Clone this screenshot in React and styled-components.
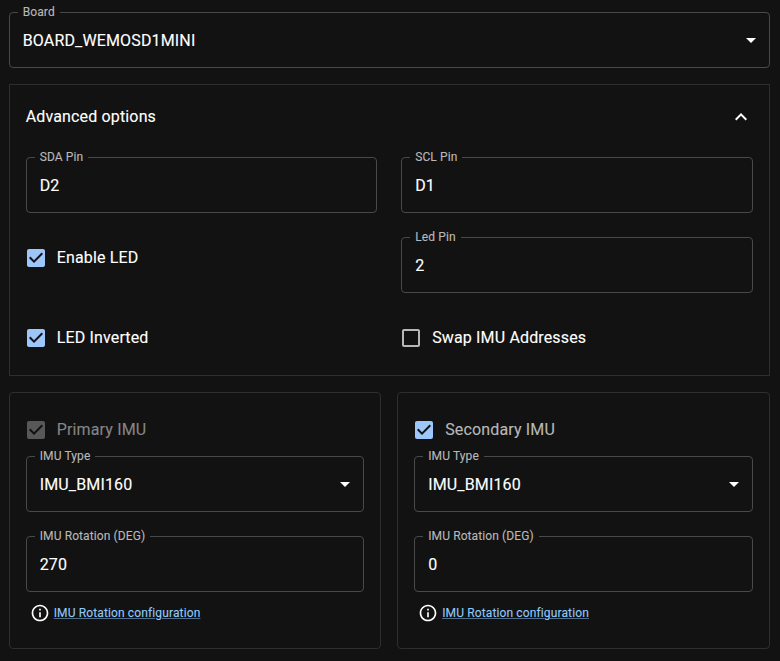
import React from "react";
import styled, { createGlobalStyle } from "styled-components";

const GlobalStyle = createGlobalStyle`
  *, *::before, *::after { box-sizing: border-box; }
  html, body { margin: 0; background: #121212; }
  body {
    color: #fff;
    font: 400 16px/24px Roboto, "Liberation Sans", sans-serif;
    letter-spacing: 0.15px;
    -webkit-text-stroke: 0.12px currentColor;
  }
`;

const Page = styled.main`
  display: flex;
  flex-direction: column;
  gap: 16px;
  width: 780px;
  height: 661px;
  padding: 12px 10.3px 0 8.7px;
  overflow: hidden;
`;

const Outline = styled.div`
  position: relative;
  display: flex;
  align-items: center;
  justify-content: space-between;
  height: 56px;
  padding: 0 6px 0 13px;
  border: 1px solid #494949;
  border-radius: 4px;
`;

const FloatingLabel = styled.span`
  position: absolute;
  left: 8px;
  top: -9px;
  padding: 0 5px;
  background: #121212;
  color: #b8b8b8;
  font-size: 12px;
  line-height: 16px;
  letter-spacing: 0.11px;
  white-space: nowrap;
`;

const Value = styled.span`
  line-height: 23px;
`;

const Icon = styled.svg`
  display: block;
  flex: none;
  width: ${(p) => p.$size || 24}px;
  height: ${(p) => p.$size || 24}px;
  fill: ${(p) => p.$color || "#fff"};
`;

const Panel = styled.section`
  height: 292px;
  padding: 0 16px;
  border: 1px solid #2e2e2e;
`;

const PanelHeader = styled.header`
  display: flex;
  align-items: center;
  justify-content: space-between;
  height: 64px;
  margin-bottom: 8px;
`;

const OptionGrid = styled.div`
  display: grid;
  grid-template-columns: 1fr 1fr;
  gap: 24px;
  align-items: start;
`;

const CheckRow = styled.label`
  display: flex;
  align-items: center;
  gap: 9px;
  height: 42px;
  margin-left: -2px;
  color: ${(p) => p.$color || "#fff"};
`;

const Cards = styled.div`
  display: grid;
  grid-template-columns: 1fr 1fr;
  gap: 16px;
`;

const Card = styled.section`
  display: flex;
  flex-direction: column;
  height: 257px;
  padding: 16px;
  border: 1px solid #2e2e2e;
  border-radius: 4px;
`;

const Fields = styled.div`
  display: flex;
  flex-direction: column;
  gap: 24px;
  margin-top: 5px;
`;

const HelpRow = styled.div`
  display: flex;
  align-items: center;
  gap: 4px;
  margin: 11px 0 0 4px;
  height: 20px;
`;

const HelpLink = styled.a`
  color: #90caf9;
  font-size: 12px;
  line-height: 20px;
  letter-spacing: 0.13px;
  text-decoration: underline;
  text-decoration-color: rgba(144, 202, 249, 0.5);
`;

const paths = {
  arrow: "M7 10l5 5 5-5z",
  chevron: "M12 8l-6 6 1.41 1.41L12 10.83l4.59 4.58L18 14z",
  checked:
    "M19 3H5c-1.11 0-2 .9-2 2v14c0 1.1.89 2 2 2h14c1.11 0 2-.9 2-2V5c0-1.1-.89-2-2-2zm-9 14l-5-5 1.41-1.41L10 14.17l7.59-7.59L19 8l-9 9z",
  unchecked:
    "M19 5v14H5V5h14m0-2H5c-1.1 0-2 .9-2 2v14c0 1.1.9 2 2 2h14c1.1 0 2-.9 2-2V5c0-1.1-.9-2-2-2z",
  info: "M11 7h2v2h-2zm0 4h2v6h-2zm1-9C6.48 2 2 6.48 2 12s4.48 10 10 10 10-4.48 10-10S17.52 2 12 2zm0 18c-4.41 0-8-3.59-8-8s3.59-8 8-8 8 3.59 8 8-3.59 8-8 8z",
};

const Glyph = ({ name, size, color }) => (
  <Icon viewBox="0 0 24 24" $size={size} $color={color} aria-hidden="true">
    <path d={paths[name]} />
  </Icon>
);

const Field = ({ label, value, select }) => (
  <Outline>
    <FloatingLabel>{label}</FloatingLabel>
    <Value>{value}</Value>
    {select && <Glyph name="arrow" />}
  </Outline>
);

const Check = ({ label, checked, color, textColor }) => (
  <CheckRow $color={textColor}>
    <Glyph
      name={checked ? "checked" : "unchecked"}
      color={color || (checked ? "#9dc6fa" : "#b8b8b8")}
    />
    <span>{label}</span>
  </CheckRow>
);

const ImuCard = ({ title, rotation, disabled }) => (
  <Card>
    <Check
      label={title}
      checked
      color={disabled ? "#585858" : undefined}
      textColor={disabled ? "#858585" : "#b8b8b8"}
    />
    <Fields>
      <Field label="IMU Type" value="IMU_BMI160" select />
      <Field label="IMU Rotation (DEG)" value={rotation} />
    </Fields>
    <HelpRow>
      <Glyph name="info" size={20} />
      <HelpLink href="#">IMU Rotation configuration</HelpLink>
    </HelpRow>
  </Card>
);

export default function App() {
  return (
    <>
      <GlobalStyle />
      <Page>
        <Field label="Board" value="BOARD_WEMOSD1MINI" select />
        <Panel>
          <PanelHeader>
            <span>Advanced options</span>
            <Glyph name="chevron" />
          </PanelHeader>
          <OptionGrid>
            <Field label="SDA Pin" value="D2" />
            <Field label="SCL Pin" value="D1" />
            <Check label="Enable LED" checked />
            <Field label="Led Pin" value="2" />
            <Check label="LED Inverted" checked />
            <Check label="Swap IMU Addresses" />
          </OptionGrid>
        </Panel>
        <Cards>
          <ImuCard title="Primary IMU" rotation="270" disabled />
          <ImuCard title="Secondary IMU" rotation="0" />
        </Cards>
      </Page>
    </>
  );
}
